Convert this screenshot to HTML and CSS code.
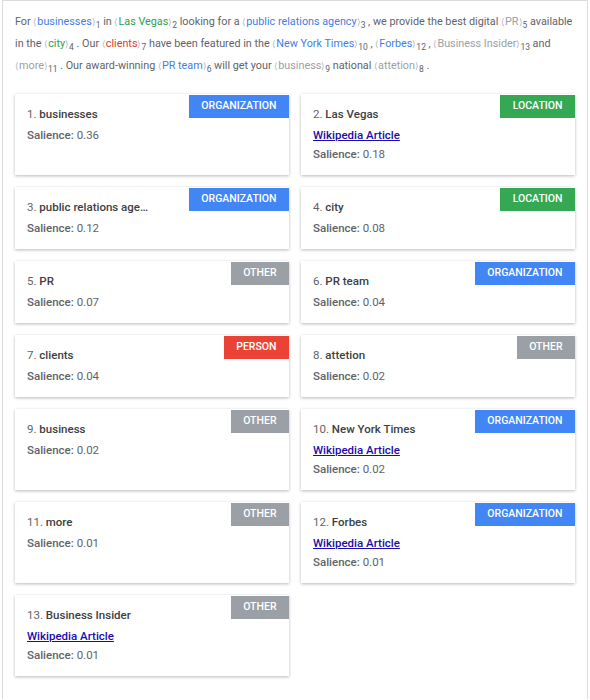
FILE: index.html
```html
<!DOCTYPE html>
<html>
<head>
<meta charset="utf-8">
<link rel="stylesheet" href="styles.css">
</head>
<body>
<div class="panel">
  <p class="annotated">
    For <span class="ent org"><span class="br">⟨</span>businesses<span class="br">⟩</span></span><sub>1</sub> in
    <span class="ent loc"><span class="br">⟨</span>Las Vegas<span class="br">⟩</span></span><sub>2</sub> looking for a
    <span class="ent org"><span class="br">⟨</span>public relations agency<span class="br">⟩</span></span><sub>3</sub> , we provide the best digital
    <span class="ent oth"><span class="br">⟨</span>PR<span class="br">⟩</span></span><sub>5</sub> available<br>in the
    <span class="ent loc"><span class="br">⟨</span>city<span class="br">⟩</span></span><sub>4</sub> . Our
    <span class="ent per"><span class="br">⟨</span>clients<span class="br">⟩</span></span><sub>7</sub> have been featured in the
    <span class="ent org"><span class="br">⟨</span>New York Times<span class="br">⟩</span></span><sub>10</sub> ,
    <span class="ent org"><span class="br">⟨</span>Forbes<span class="br">⟩</span></span><sub>12</sub> ,
    <span class="ent oth"><span class="br">⟨</span>Business Insider<span class="br">⟩</span></span><sub>13</sub> and<br>
    <span class="ent oth"><span class="br">⟨</span>more<span class="br">⟩</span></span><sub>11</sub> . Our award-winning
    <span class="ent org"><span class="br">⟨</span>PR team<span class="br">⟩</span></span><sub>6</sub> will get your
    <span class="ent oth"><span class="br">⟨</span>business<span class="br">⟩</span></span><sub>9</sub> national
    <span class="ent oth"><span class="br">⟨</span>attetion<span class="br">⟩</span></span><sub>8</sub> .
  </p>

  <div class="grid">
    <div class="card">
      <span class="badge org">Organization</span>
      <div class="title"><span class="num">1.</span> <b>businesses</b></div>
      <div class="sal"><b>Salience:</b> 0.36</div>
    </div>
    <div class="card">
      <span class="badge loc">Location</span>
      <div class="title"><span class="num">2.</span> <b>Las Vegas</b></div>
      <a class="wiki" href="#">Wikipedia Article</a>
      <div class="sal"><b>Salience:</b> 0.18</div>
    </div>
    <div class="card">
      <span class="badge org">Organization</span>
      <div class="title"><span class="num">3.</span> <b>public relations age…</b></div>
      <div class="sal"><b>Salience:</b> 0.12</div>
    </div>
    <div class="card">
      <span class="badge loc">Location</span>
      <div class="title"><span class="num">4.</span> <b>city</b></div>
      <div class="sal"><b>Salience:</b> 0.08</div>
    </div>
    <div class="card">
      <span class="badge oth">Other</span>
      <div class="title"><span class="num">5.</span> <b>PR</b></div>
      <div class="sal"><b>Salience:</b> 0.07</div>
    </div>
    <div class="card">
      <span class="badge org">Organization</span>
      <div class="title"><span class="num">6.</span> <b>PR team</b></div>
      <div class="sal"><b>Salience:</b> 0.04</div>
    </div>
    <div class="card">
      <span class="badge per">Person</span>
      <div class="title"><span class="num">7.</span> <b>clients</b></div>
      <div class="sal"><b>Salience:</b> 0.04</div>
    </div>
    <div class="card">
      <span class="badge oth">Other</span>
      <div class="title"><span class="num">8.</span> <b>attetion</b></div>
      <div class="sal"><b>Salience:</b> 0.02</div>
    </div>
    <div class="card">
      <span class="badge oth">Other</span>
      <div class="title"><span class="num">9.</span> <b>business</b></div>
      <div class="sal"><b>Salience:</b> 0.02</div>
    </div>
    <div class="card">
      <span class="badge org">Organization</span>
      <div class="title"><span class="num">10.</span> <b>New York Times</b></div>
      <a class="wiki" href="#">Wikipedia Article</a>
      <div class="sal"><b>Salience:</b> 0.02</div>
    </div>
    <div class="card">
      <span class="badge oth">Other</span>
      <div class="title"><span class="num">11.</span> <b>more</b></div>
      <div class="sal"><b>Salience:</b> 0.01</div>
    </div>
    <div class="card">
      <span class="badge org">Organization</span>
      <div class="title"><span class="num">12.</span> <b>Forbes</b></div>
      <a class="wiki" href="#">Wikipedia Article</a>
      <div class="sal"><b>Salience:</b> 0.01</div>
    </div>
    <div class="card">
      <span class="badge oth">Other</span>
      <div class="title"><span class="num">13.</span> <b>Business Insider</b></div>
      <a class="wiki" href="#">Wikipedia Article</a>
      <div class="sal"><b>Salience:</b> 0.01</div>
    </div>
  </div>
</div>
</body>
</html>
```

FILE: styles.css
```css
html, body {
  margin: 0;
  padding: 0;
  background: #ffffff;
}
body {
  font-family: Roboto, "Liberation Sans", sans-serif;
  color: #5f6368;
}
.panel {
  margin: 0 2px;
  border: 1px solid #dadce0;
  border-bottom: none;
  padding: 10px 12px 20px;
  min-height: 668px;
}
.annotated {
  margin: 0;
  font-size: 10.8px;
  line-height: 22px;
  color: #5f6368;
}
.annotated sub {
  font-size: 8.5px;
  line-height: 1;
  vertical-align: -3px;
  color: #5f6368;
}
.ent { font-weight: 400; }
.ent .br { color: #b0b3b8; font-size: 9px; }
.ent.org { color: #3f7ee8; }
.ent.loc { color: #2f9e4d; }
.ent.per { color: #e0392b; }
.ent.oth { color: #9aa0a6; }

.grid {
  margin-top: 17px;
  display: grid;
  grid-template-columns: 1fr 1fr;
  gap: 12px;
}
.card {
  position: relative;
  background: #fff;
  box-shadow: 0 1px 3px rgba(0,0,0,0.28);
  padding: 12px 12px 13px;
  font-size: 11.5px;
  display: flex;
  flex-direction: column;
  align-items: flex-start;
}
.title {
  line-height: 16px;
  margin-bottom: 5px;
  color: #5f6368;
}
.title b { font-weight: 500; color: #3c4043; }
.wiki {
  line-height: 16px;
  margin-bottom: 3px;
  color: #1a0dab;
  font-weight: 500;
  text-decoration: underline;
}
.sal {
  line-height: 16px;
}
.sal b { font-weight: 500; }
.badge {
  position: absolute;
  top: 1px;
  right: 0;
  height: 23px;
  line-height: 22px;
  padding: 0 12.5px;
  font-size: 10.5px;
  font-weight: 500;
  text-transform: uppercase;
  color: #fff;
  box-sizing: border-box;
}
.badge.org { background: #4285f4; }
.badge.loc { background: #34a853; }
.badge.per { background: #ea4335; }
.badge.oth { background: #9aa0a6; }
```
